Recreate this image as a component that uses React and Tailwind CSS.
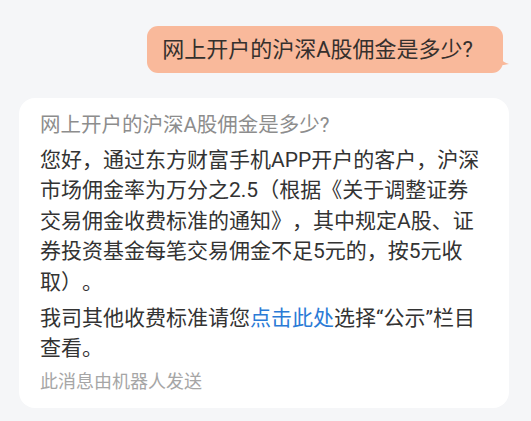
import React from 'react';

const FONT = { fontFamily: 'Roboto, "Noto Sans CJK SC", sans-serif' };

const App = () => {
  return (
    <div className="w-[531px] h-[421px] bg-[#f5f6f8] overflow-hidden [text-spacing-trim:space-all]" style={FONT}>
      {/* User question bubble */}
      <div className="flex justify-end pt-[26px] pr-[28px]">
        <div className="relative bg-[#f9b99b] rounded-[11px] h-[47px] pl-[15px] pr-[30px] flex items-center">
          <span className="text-[22px] text-[#35302d] whitespace-nowrap leading-none">网上开户的沪深A股佣金是多少?</span>
          <svg
            className="absolute right-[-7px] top-[31px]"
            width="10"
            height="10"
            viewBox="0 0 10 10"
          >
            <path d="M0 0 C2 4 5 6 9 7 C5 8 2 8 0 8 Z" fill="#f9b99b" />
          </svg>
        </div>
      </div>

      {/* Bot answer card */}
      <div className="mt-[25px] ml-[19px] mr-[22px] bg-white rounded-[16px] pl-[21px] pt-[13px] pb-[13px] flex flex-col gap-[5.5px]">
        <div className="text-[20.5px] leading-[28px] text-[#8d8d8d] whitespace-nowrap">网上开户的沪深A股佣金是多少?</div>
        <p className="text-[21px] leading-[30.5px] text-[#333333] whitespace-nowrap">
          您好，通过东方财富手机APP开户的客户，沪深
          <br />
          市场佣金率为万分之2.5（根据《关于调整证券
          <br />
          交易佣金收费标准的通知》，其中规定A股、证
          <br />
          券投资基金每笔交易佣金不足5元的，按5元收
          <br />
          取）。
        </p>
        <p className="text-[21px] leading-[30.5px] text-[#333333] whitespace-nowrap">
          我司其他收费标准请您<span className="text-[#2b7bd6]">点击此处</span>选择“公示”栏目
          <br />
          查看。
        </p>
        <div className="text-[18px] leading-[26px] text-[#a6a6a6] whitespace-nowrap">此消息由机器人发送</div>
      </div>
    </div>
  );
};

export default App;
